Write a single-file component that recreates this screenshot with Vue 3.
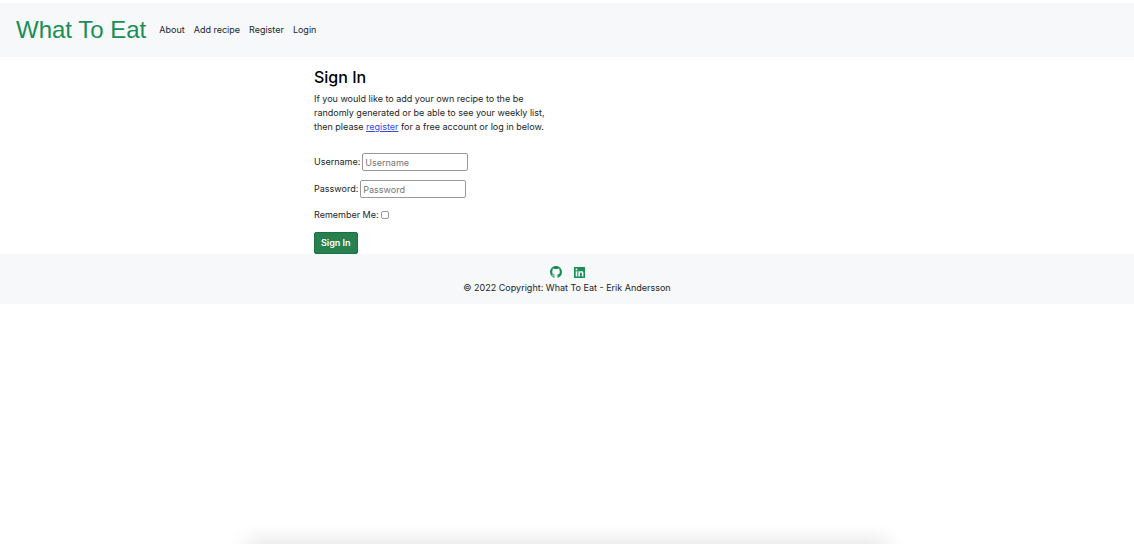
<script setup>
import { ref } from 'vue'

const username = ref('')
const password = ref('')
const remember = ref(false)
const links = ['About', 'Add recipe', 'Register', 'Login']
</script>

<template>
  <div class="page">
    <header class="navbar">
      <a class="brand" href="#">What To Eat</a>
      <nav class="links">
        <a v-for="link in links" :key="link" href="#">{{ link }}</a>
      </nav>
    </header>

    <main class="container">
      <section class="column">
        <h1>Sign In</h1>
        <p>
          If you would like to add your own recipe to the be randomly generated
          or be able to see your weekly list, then please
          <a href="#">register</a> for a free account or log in below.
        </p>
        <form @submit.prevent>
          <div class="field">
            <label for="username">Username:</label>
            <input id="username" v-model="username" type="text" placeholder="Username" />
          </div>
          <div class="field">
            <label for="password">Password:</label>
            <input id="password" v-model="password" type="password" placeholder="Password" />
          </div>
          <div class="field">
            <label for="remember">Remember Me:</label>
            <input id="remember" v-model="remember" type="checkbox" />
          </div>
          <button type="submit">Sign In</button>
        </form>
      </section>
    </main>

    <footer class="footer">
      <div class="social">
        <a href="#" aria-label="GitHub">
          <svg viewBox="0 0 16 16" width="12" height="12" fill="currentColor">
            <path d="M8 0C3.58 0 0 3.58 0 8c0 3.54 2.29 6.53 5.47 7.59.4.07.55-.17.55-.38 0-.19-.01-.82-.01-1.49-2.01.37-2.53-.49-2.69-.94-.09-.23-.48-.94-.82-1.13-.28-.15-.68-.52-.01-.53.63-.01 1.08.58 1.23.82.72 1.21 1.87.87 2.33.66.07-.52.28-.87.51-1.07-1.78-.2-3.64-.89-3.64-3.95 0-.87.31-1.59.82-2.15-.08-.2-.36-1.02.08-2.12 0 0 .67-.21 2.2.82.64-.18 1.32-.27 2-.27s1.36.09 2 .27c1.53-1.04 2.2-.82 2.2-.82.44 1.1.16 1.92.08 2.12.51.56.82 1.27.82 2.15 0 3.07-1.87 3.75-3.65 3.95.29.25.54.73.54 1.48 0 1.07-.01 1.93-.01 2.2 0 .21.15.46.55.38A8.01 8.01 0 0 0 16 8c0-4.42-3.58-8-8-8z" />
          </svg>
        </a>
        <a href="#" aria-label="LinkedIn">
          <svg viewBox="0 0 448 448" width="11" height="11" fill="currentColor">
            <path d="M432 0H16C7 0 0 7 0 16v416c0 9 7 16 16 16h416c9 0 16-7 16-16V16c0-9-7-16-16-16zM135.400 384H69V170.200h66.500V384h-.1zM102.200 141c-21.300 0-38.500-17.300-38.500-38.500S80.900 64 102.200 64c21.200 0 38.500 17.300 38.500 38.500 0 21.300-17.200 38.500-38.500 38.500zm282.100 243h-66.400V280c0-24.800-.5-56.700-34.500-56.700-34.600 0-39.900 27-39.900 54.900V384h-66.400V170.200h63.700v29.200h.9c8.900-16.800 30.600-34.500 62.900-34.500 67.200 0 79.700 44.300 79.700 101.900V384z" />
          </svg>
        </a>
      </div>
      <div>© 2022 Copyright: What To Eat - Erik Andersson</div>
    </footer>
    <div class="dock-shadow" aria-hidden="true"></div>
  </div>
</template>

<style>
body {
  background: #fff;
}
</style>

<style scoped>
.page {
  min-height: 100vh;
  box-sizing: border-box;
  padding-top: 3px;
  position: relative;
  overflow: hidden;
  font: 9px/14px Inter, "Liberation Sans", sans-serif;
  color: #212529;
}

.navbar {
  display: flex;
  align-items: center;
  gap: 13px;
  min-height: 54px;
  padding: 0 16px;
  background: #f7f8fa;
}

.brand {
  font: 24px/36px "Liberation Sans", sans-serif;
  color: #198f55;
  text-decoration: none;
}

.links {
  display: flex;
  gap: 9px;
}

.links a {
  color: #212529;
  text-decoration: none;
}

.container {
  box-sizing: border-box;
  max-width: 520px;
  margin: 0 auto;
  padding: 0 7px;
}

.column {
  width: 50%;
  box-sizing: border-box;
  padding-right: 14px;
}

h1 {
  margin: 0;
  padding: 10px 0 5px;
  font-size: 16px;
  line-height: 20px;
  font-weight: 500;
  color: #000;
}

p {
  margin: 0 0 19px;
}

p a {
  color: #2f4be8;
}

.field {
  display: flex;
  align-items: center;
  gap: 2px;
  margin-bottom: 9px;
}

.field:last-of-type {
  padding: 1px 0;
}

.field input {
  font: inherit;
  color: inherit;
  margin: 0;
}

.field input:not([type="checkbox"]) {
  box-sizing: border-box;
  width: 106px;
  height: 18px;
  padding: 1px 2px;
  border: 1px solid #999;
  border-radius: 2px;
  background: #fff;
}

.field input::placeholder {
  color: #757575;
}

.field input[type="checkbox"] {
  appearance: none;
  box-sizing: border-box;
  width: 8px;
  height: 8px;
  border: 1px solid #999;
  border-radius: 2px;
  background: #fff;
}

.field input[type="checkbox"]:checked {
  background: #198754;
}

button {
  display: block;
  height: 22px;
  padding: 0 6px;
  font: 600 9px/14px Inter, "Liberation Sans", sans-serif;
  color: #fff;
  background: #28804f;
  border: 1px solid #17723f;
  border-radius: 2px;
}

.footer {
  padding: 12px 16px 9px;
  text-align: center;
  background: #f7f8fa;
}

.social {
  display: flex;
  justify-content: center;
  align-items: center;
  gap: 12px;
  height: 12px;
  margin-bottom: 3px;
}

.social a {
  display: flex;
  color: #198f55;
}

.dock-shadow {
  position: absolute;
  top: 100%;
  left: 22%;
  right: 22%;
  height: 20px;
  box-shadow: 0 0 22px 2px rgba(0, 0, 0, 0.13);
}
</style>
